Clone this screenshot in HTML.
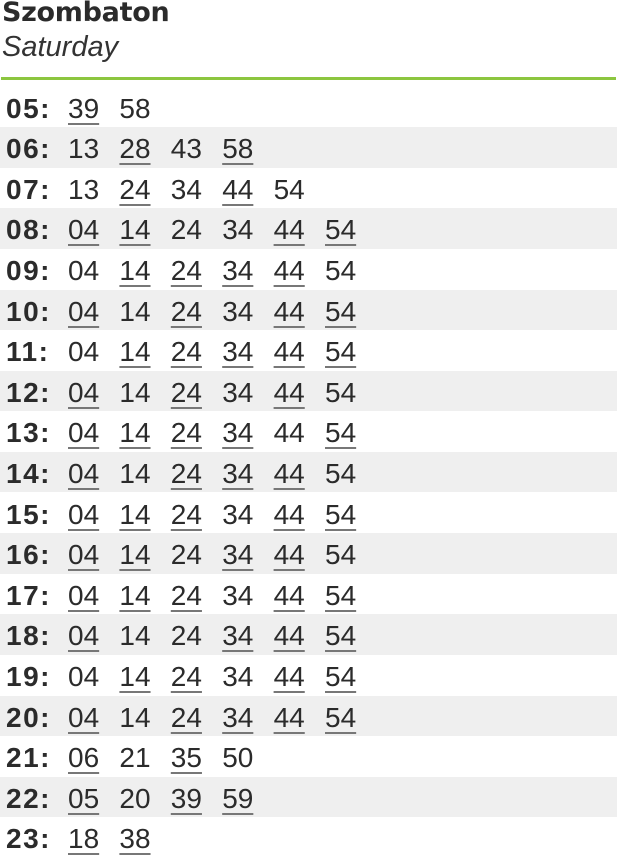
<!DOCTYPE html>
<html><head><style>
body{margin:0;width:617px;height:855px;background:#fff;font-family:"DejaVu Sans","Liberation Sans",sans-serif;color:#2b2b2b;position:relative;overflow:hidden}
.t1{position:absolute;left:2px;top:-3px;font-size:27px;font-weight:bold;letter-spacing:-0.3px}
.t2{position:absolute;left:2px;top:31px;font-size:29px;font-style:italic;font-family:"Liberation Sans",sans-serif;color:#333}
.g{position:absolute;left:1px;top:77px;width:615px;height:3px;background:#8cc63f}
.r{position:absolute;left:0;width:617px;height:40.6px}
.r.a{background:#efefef}
.r span{position:absolute;top:7px;font-size:28px;line-height:30px;font-family:"Liberation Sans",sans-serif}
.r span.h{left:6px;font-weight:bold;letter-spacing:1.5px}
.u{text-decoration:underline;text-decoration-color:#777;text-decoration-thickness:2px;text-underline-offset:5px}
</style></head><body>
<div class="t1">Szombaton</div>
<div class="t2">Saturday</div>
<div class="g"></div>
<div id="c"></div>
<script>
var d=[["05","_39 58"],["06","13 _28 43 _58"],["07","13 _24 34 _44 54"],["08","_04 _14 24 34 _44 _54"],["09","04 _14 _24 _34 _44 54"],["10","_04 14 _24 34 _44 _54"],["11","04 _14 _24 _34 _44 _54"],["12","_04 14 _24 34 _44 54"],["13","_04 _14 _24 _34 44 _54"],["14","_04 14 _24 _34 _44 54"],["15","_04 _14 _24 34 _44 _54"],["16","_04 _14 24 _34 _44 54"],["17","_04 _14 _24 34 _44 _54"],["18","_04 14 24 _34 _44 _54"],["19","04 _14 _24 34 _44 _54"],["20","_04 14 _24 _34 _44 _54"],["21","_06 21 _35 50"],["22","_05 20 _39 _59"],["23","_18 _38"]];
var h="";d.forEach(function(r,i){h+='<div class="r'+(i%2?' a':'')+'" style="top:'+(86.5+i*40.6)+'px"><span class="h">'+r[0]+':</span>';
r[1].split(" ").forEach(function(m,j){var u=m[0]=="_";h+='<span class="'+(u?'u':'')+'" style="left:'+(68+j*51.4)+'px">'+(u?m.slice(1):m)+'</span>';});h+='</div>';});
document.getElementById("c").innerHTML=h;
</script>
</body></html>
